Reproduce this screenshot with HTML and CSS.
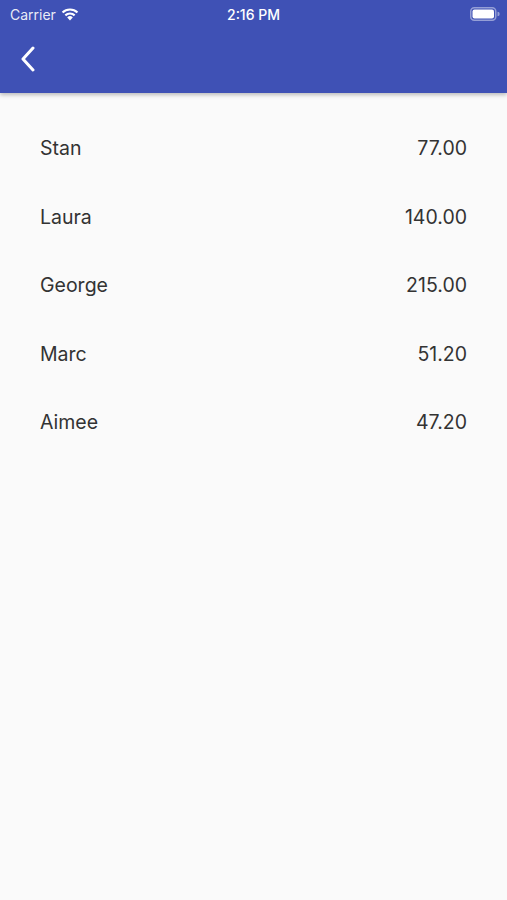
FILE: index.html
```html
<!DOCTYPE html>
<html lang="en">

<head>
    <meta charset="UTF-8">
    <meta name="viewport" content="width=device-width, initial-scale=1.0">
    <title>Totals</title>
    <link rel="stylesheet" href="styles.css">
</head>

<body>
    <header class="appbar">
        <div class="statusbar">
            <div class="carrier">
                Carrier
                <svg class="wifi" width="18" height="13" viewBox="0 0 18 13">
                    <path d="M9 12.5 L6.2 9.4 A4 4 0 0 1 11.8 9.4 Z" fill="#fff" />
                    <path d="M3.6 6.6 A7.8 7.8 0 0 1 14.4 6.6 L12.9 8.2 A5.6 5.6 0 0 0 5.1 8.2 Z" fill="#fff" />
                    <path d="M0.8 3.7 A11.8 11.8 0 0 1 17.2 3.7 L15.7 5.3 A9.6 9.6 0 0 0 2.3 5.3 Z" fill="#fff" />
                </svg>
            </div>
            <div class="time">2:16 PM</div>
            <div class="battery">
                <svg width="30" height="14" viewBox="0 0 30 14">
                    <rect x="0.75" y="0.75" width="25" height="12.5" rx="3.5" fill="none" stroke="rgba(255,255,255,0.45)" stroke-width="1.5" />
                    <rect x="2.5" y="2.5" width="21.5" height="9" rx="2" fill="#fff" />
                    <path d="M27.5 4.8 A2.2 2.2 0 0 1 27.5 9.2 Z" fill="rgba(255,255,255,0.45)" />
                </svg>
            </div>
        </div>
        <div class="toolbar">
            <svg class="back" width="18" height="26" viewBox="0 0 18 26">
                <path d="M14 2 L4 13 L14 24" fill="none" stroke="#fff" stroke-width="3" stroke-linecap="round" stroke-linejoin="round" />
            </svg>
        </div>
    </header>

    <ul class="list">
        <li class="row"><span>Stan</span><span>77.00</span></li>
        <li class="row"><span>Laura</span><span>140.00</span></li>
        <li class="row"><span>George</span><span>215.00</span></li>
        <li class="row"><span>Marc</span><span>51.20</span></li>
        <li class="row"><span>Aimee</span><span>47.20</span></li>
    </ul>
</body>

</html>
```

FILE: styles.css
```css
body {
    margin: 0;
    font-family: Inter, "Noto Sans", sans-serif;
    background-color: #fafafa;
    height: 900px;
}

.appbar {
    background-color: #3f51b5;
    height: 93px;
    box-shadow: 0 2px 4px rgba(0, 0, 0, 0.25);
    color: #fff;
}

.statusbar {
    height: 28px;
    display: flex;
    align-items: center;
    justify-content: space-between;
    padding: 0 7px 0 10px;
    font-size: 14px;
    position: relative;
}

.carrier {
    display: flex;
    align-items: center;
    gap: 5px;
    color: rgba(255, 255, 255, 0.9);
}

.time {
    position: absolute;
    left: 0;
    right: 0;
    text-align: center;
    font-weight: 500;
    pointer-events: none;
}

.battery {
    display: flex;
    align-items: center;
}

.toolbar {
    height: 65px;
    display: flex;
    align-items: center;
    padding-left: 19px;
}

.back {
    margin-top: -4px;
}

.list {
    list-style: none;
    margin: 0;
    padding: 21px 40px 0 40px;
}

.row {
    display: flex;
    justify-content: space-between;
    align-items: center;
    height: 68.5px;
    font-size: 19.5px;
    color: #333;
}
```
